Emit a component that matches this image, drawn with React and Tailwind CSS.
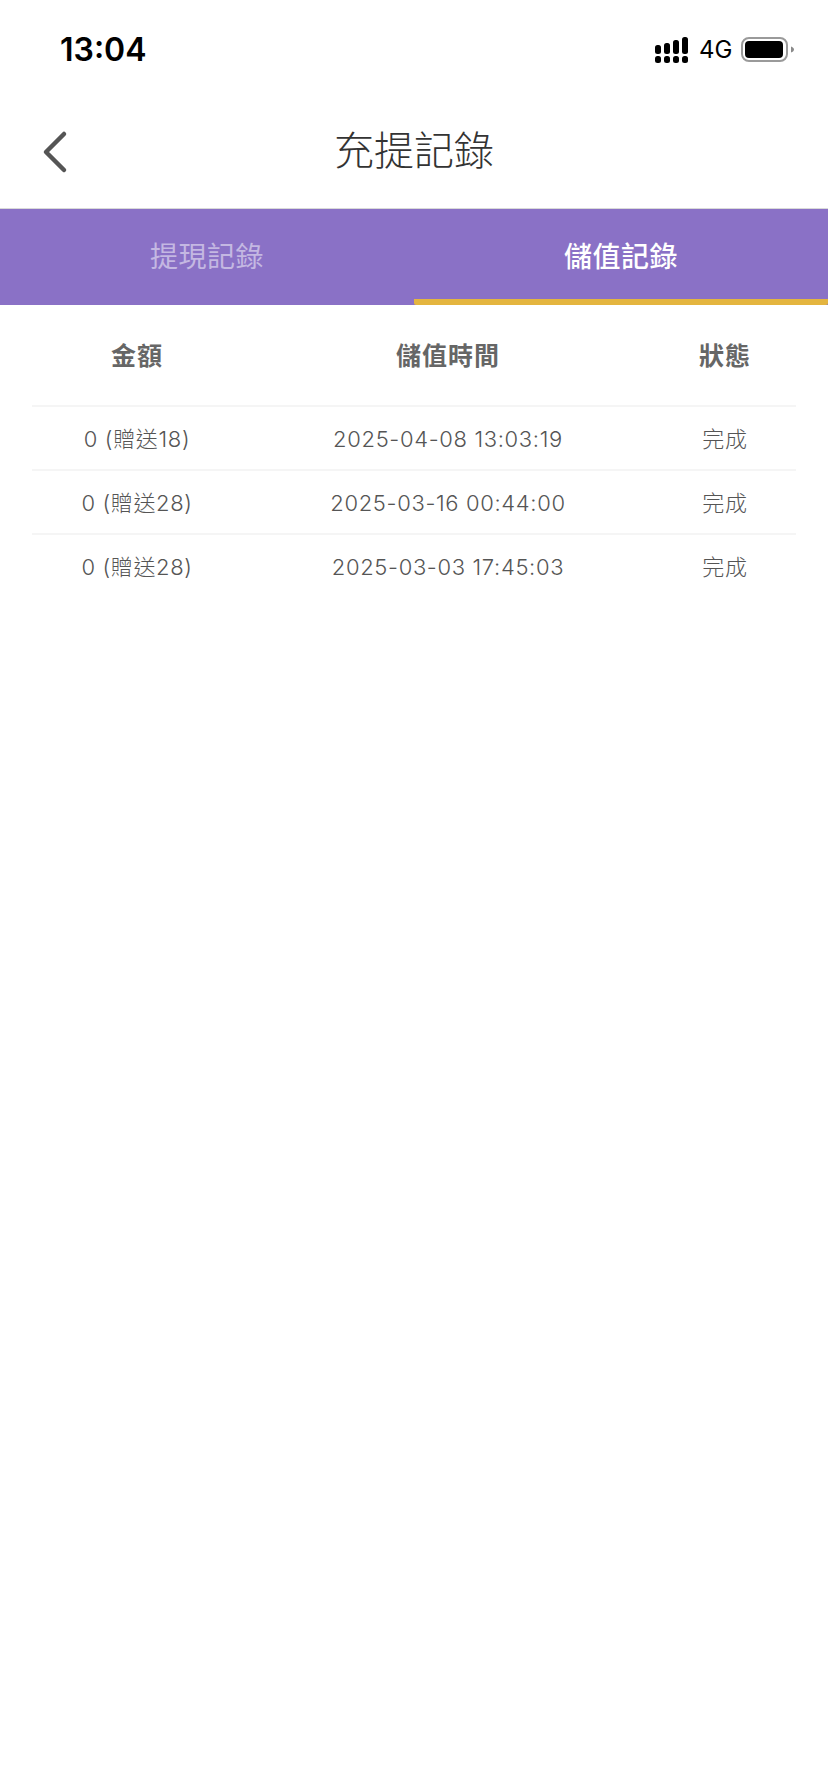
const records = [
  { amount: "0 (贈送18)", time: "2025-04-08 13:03:19", status: "完成" },
  { amount: "0 (贈送28)", time: "2025-03-16 00:44:00", status: "完成" },
  { amount: "0 (贈送28)", time: "2025-03-03 17:45:03", status: "完成" },
];

const fontStack = "font-['Inter','Noto_Sans_CJK_TC',sans-serif]";

function SignalIcon() {
  return (
    <svg width="33" height="26" viewBox="0 0 33 26" fill="#000">
      {/* bottom row of dots */}
      <rect x="0" y="19" width="6" height="7" rx="2.500" />
      <rect x="9" y="19" width="6" height="7" rx="2.500" />
      <rect x="18" y="19" width="6" height="7" rx="2.500" />
      <rect x="27" y="19" width="6" height="7" rx="2.500" />
      {/* rising bars */}
      <rect x="0" y="8" width="6" height="9" rx="2.500" />
      <rect x="9" y="6" width="6" height="11" rx="2.500" />
      <rect x="18" y="3" width="6" height="14" rx="2.500" />
      <rect x="27" y="0" width="6" height="17" rx="2.500" />
    </svg>
  );
}

function BatteryIcon() {
  return (
    <svg width="53" height="26" viewBox="0 0 53 26">
      <rect x="1" y="1" width="45" height="23" rx="7" fill="none" stroke="#9a9a9a" strokeWidth="2" />
      <rect x="4" y="4" width="38" height="17" rx="4" fill="#000" />
      <path d="M50 9.500c1.500 .5 3 1.500 3 3s-1.500 2.500-3 3z" fill="#8a8a8a" />
    </svg>
  );
}

export default function App() {
  return (
    <div className={`min-h-[1792px] w-full bg-white ${fontStack}`}>
      {/* Status bar */}
      <div className="flex h-[88px] items-start justify-between pl-[60px] pr-[34px] pt-[31px]">
        <span className="text-[32px] font-semibold leading-[38px] text-black">13:04</span>
        <div className="flex items-center pt-[6px]">
          <SignalIcon />
          <span className="ml-[11px] w-[33px] text-[24px] leading-[26px] text-black">4G</span>
          <span className="ml-[9px] flex">
            <BatteryIcon />
          </span>
        </div>
      </div>

      {/* Nav bar */}
      <div className="relative flex h-[121px] items-center justify-center border-b border-[#d9d9d9]">
        <svg
          className="absolute left-[40px] top-[42px]"
          width="30"
          height="44"
          viewBox="0 0 30 44"
          fill="none"
          stroke="#555"
          strokeWidth="4.500"
          strokeLinecap="round"
          strokeLinejoin="round"
        >
          <path d="M24 4 L6 22 L24 40" />
        </svg>
        <h1 className="pt-[5px] text-[40px] font-light leading-[48px] text-[#333]">充提記錄</h1>
      </div>

      {/* Tabs */}
      <div className="flex h-[96px] bg-[#8a71c6]">
        <div className="flex w-1/2 items-center justify-center pb-[1px] text-[28px] leading-[36px] tracking-[0.5px] text-white/50">
          提現記錄
        </div>
        <div className="flex w-1/2 items-center justify-center rounded-b-[2px] border-b-[6px] border-[#e4b53f] pt-[5px] text-[28px] font-medium leading-[36px] tracking-[0.5px] text-white">
          儲值記錄
        </div>
      </div>

      {/* Records table */}
      <div className="mx-[32px]">
        <div className="grid h-[100px] grid-cols-[210px_412px_142px] items-center pt-[1px] text-center text-[25px] font-semibold leading-[32px] tracking-[1px] text-[#666]">
          <div>金額</div>
          <div>儲值時間</div>
          <div>狀態</div>
        </div>
        {records.map((r) => (
          <div
            key={r.time}
            className="grid h-[64px] grid-cols-[210px_412px_142px] items-center border-t-2 border-[#f5f5f5] pt-[1px] text-center text-[22px] font-light leading-[30px] tracking-[0.65px] text-[#555]"
          >
            <div>{r.amount}</div>
            <div>{r.time}</div>
            <div>{r.status}</div>
          </div>
        ))}
      </div>
    </div>
  );
}
